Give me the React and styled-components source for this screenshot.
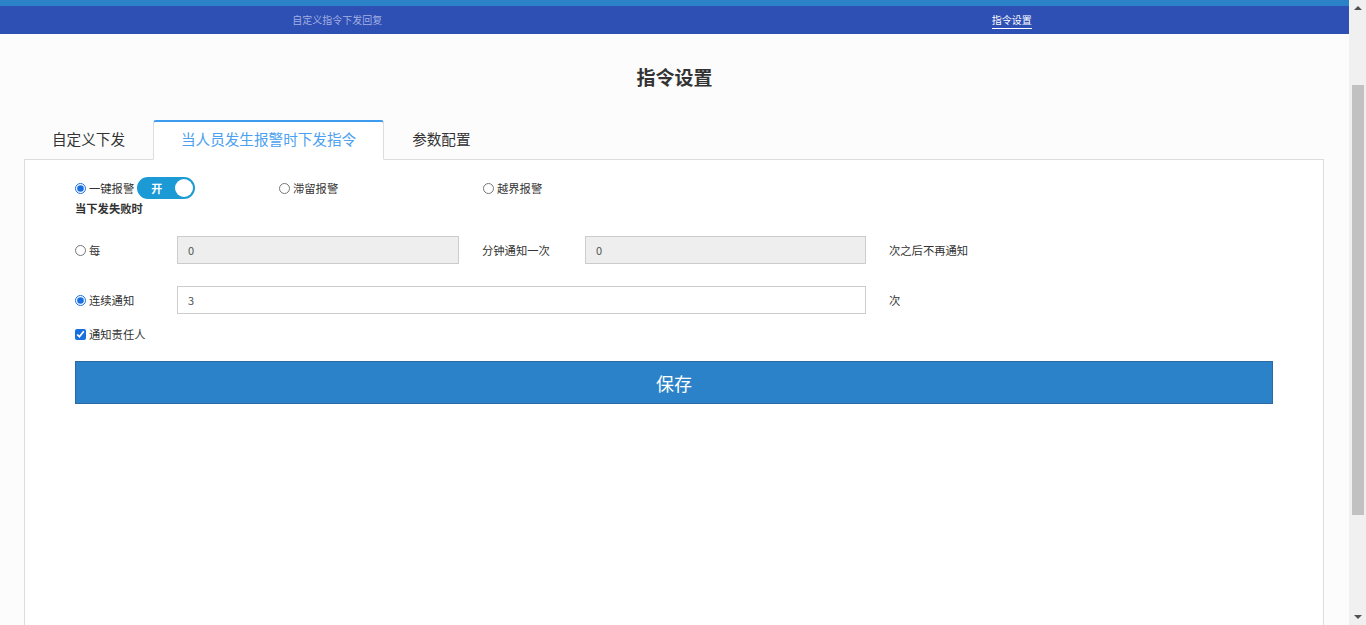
import React, { useState } from "react";
import styled, { createGlobalStyle } from "styled-components";

const GlobalStyle = createGlobalStyle`
  html, body {
    margin: 0;
    padding: 0;
    background: #fcfcfc;
    font-family: "Noto Sans CJK SC", "Noto Sans", sans-serif;
    color: #333;
    overflow: hidden;
  }
  * { box-sizing: border-box; }
`;

const Frame = styled.div`
  display: flex;
  height: 100vh;
`;

const Page = styled.div`
  flex: 1;
  min-width: 0;
  overflow: hidden;
`;

const ScrollBar = styled.aside`
  width: 17px;
  flex: none;
  background: #f0f0f0;
  display: flex;
  flex-direction: column;
  align-items: center;
  padding: 0 0 0 1px;
`;

const Arrow = styled.span`
  width: 0;
  height: 0;
  margin: 6px 0;
  border-left: 4px solid transparent;
  border-right: 4px solid transparent;
  ${({ $down }) =>
    $down ? "border-top: 4px solid #505050;" : "border-bottom: 4px solid #505050;"}
`;

const Track = styled.div`
  flex: 1;
  width: 100%;
  padding: 69px 2px 94px;
  display: flex;
`;

const Thumb = styled.div`
  flex: 1;
  background: #c1c1c1;
`;

const TopStrip = styled.div`
  height: 6px;
  background: #2b82c9;
`;

const NavBar = styled.nav`
  height: 28px;
  background: #2e4fb3;
  display: flex;
`;

const NavItem = styled.div`
  flex: 1;
  display: flex;
  justify-content: center;
  align-items: center;
`;

const NavLink = styled.span`
  font-size: 10px;
  line-height: 14px;
  color: ${({ $active }) => ($active ? "#fff" : "#a3b0e3")};
  padding-bottom: 1px;
  margin-top: 2px;
  border-bottom: 1px solid ${({ $active }) => ($active ? "#fff" : "transparent")};
`;

const Title = styled.h1`
  margin: 0;
  padding: 30px 0 26px;
  text-align: center;
  font-size: 19px;
  line-height: 26px;
  font-weight: 700;
  color: #333;
`;

const Main = styled.div`
  padding: 0 25px 22px 24px;
`;

const Tabs = styled.div`
  display: flex;
  height: 40px;
  margin-top: 4px;
  position: relative;
  z-index: 1;
  margin-bottom: -1px;
`;

const Tab = styled.div`
  padding: 0 27px 4px;
  height: 40px;
  display: flex;
  align-items: center;
  justify-content: center;
  font-size: 14.6px;
  color: ${({ $active }) => ($active ? "#4ba0f0" : "#333")};
  background: ${({ $active }) => ($active ? "#fff" : "transparent")};
  border: 1px solid ${({ $active }) => ($active ? "#ddd" : "transparent")};
  border-top: 2px solid ${({ $active }) => ($active ? "#3d9cf0" : "transparent")};
  border-bottom-color: ${({ $active }) => ($active ? "#fff" : "transparent")};
  border-radius: 3px 3px 0 0;
`;

const Panel = styled.section`
  background: #fff;
  border: 1px solid #ddd;
  min-height: 680px;
  padding: 17px 50px 20px 50px;
`;

const AlarmRow = styled.div`
  display: grid;
  grid-template-columns: repeat(3, 204px);
  align-items: center;
  height: 22px;
`;

const RadioLabel = styled.label`
  display: flex;
  align-items: center;
  gap: 3px;
  font-size: 11.3px;
  color: #333;
  white-space: nowrap;
`;

const Radio = styled.input.attrs({ type: "radio" })`
  width: 11px;
  height: 11px;
  margin: 0;
  accent-color: #1a6fe0;
`;

const Check = styled.input.attrs({ type: "checkbox" })`
  width: 11px;
  height: 11px;
  margin: 0;
  accent-color: #1a6fe0;
`;

const Toggle = styled.span`
  width: 58px;
  height: 22px;
  border-radius: 11px;
  background: #1b9ad6;
  display: flex;
  align-items: center;
  justify-content: space-between;
  padding: 0 2px 0 14px;
  color: #fff;
  font-size: 11px;
  font-weight: 700;
`;

const Knob = styled.span`
  width: 18px;
  height: 18px;
  border-radius: 50%;
  background: #fff;
`;

const SubTitle = styled.div`
  font-size: 11.3px;
  font-weight: 700;
  margin: 1px 0 20px;
  line-height: 16px;
`;

const FormRow = styled.div`
  display: grid;
  grid-template-columns: 102px 282px 126px 281px auto;
  align-items: center;
  margin-bottom: ${({ $gap }) => $gap}px;
`;

const Input = styled.input`
  height: 28px;
  width: 100%;
  border: 1px solid #ccc;
  background: ${({ disabled }) => (disabled ? "#eee" : "#fff")};
  color: #555;
  font-family: inherit;
  font-size: 11px;
  padding: 0 10px;
  outline: none;
  grid-column: ${({ $span }) => ($span ? "2 / 5" : "auto")};
`;

const Text = styled.span`
  font-size: 11.3px;
  color: #333;
  padding-left: 23px;
  white-space: nowrap;
`;

const CheckRow = styled.div`
  margin: 12px 0 19px;
`;

const SaveButton = styled.button`
  width: 100%;
  height: 43px;
  background: #2b82c8;
  border: 1px solid #2a6aa0;
  color: #fff;
  font-family: inherit;
  font-size: 18px;
  cursor: pointer;
`;

export default function App() {
  const [tab] = useState(1);
  const tabs = ["自定义下发", "当人员发生报警时下发指令", "参数配置"];

  return (
    <Frame>
      <GlobalStyle />
      <Page>
        <TopStrip />
        <NavBar>
          <NavItem>
            <NavLink>自定义指令下发回复</NavLink>
          </NavItem>
          <NavItem>
            <NavLink $active>指令设置</NavLink>
          </NavItem>
        </NavBar>
        <Title>指令设置</Title>
        <Main>
          <Tabs>
            {tabs.map((t, i) => (
              <Tab key={t} $active={i === tab}>
                {t}
              </Tab>
            ))}
          </Tabs>
          <Panel>
            <AlarmRow>
              <RadioLabel>
                <Radio name="alarm" defaultChecked />
                一键报警
                <Toggle>
                  开<Knob />
                </Toggle>
              </RadioLabel>
              <RadioLabel>
                <Radio name="alarm" />
                滞留报警
              </RadioLabel>
              <RadioLabel>
                <Radio name="alarm" />
                越界报警
              </RadioLabel>
            </AlarmRow>
            <SubTitle>当下发失败时</SubTitle>
            <FormRow $gap={22}>
              <RadioLabel>
                <Radio name="mode" />
                每
              </RadioLabel>
              <Input disabled defaultValue="0" />
              <Text>分钟通知一次</Text>
              <Input disabled defaultValue="0" />
              <Text>次之后不再通知</Text>
            </FormRow>
            <FormRow $gap={0}>
              <RadioLabel>
                <Radio name="mode" defaultChecked />
                连续通知
              </RadioLabel>
              <Input $span defaultValue="3" />
              <Text>次</Text>
            </FormRow>
            <CheckRow>
              <RadioLabel>
                <Check defaultChecked />
                通知责任人
              </RadioLabel>
            </CheckRow>
            <SaveButton>保存</SaveButton>
          </Panel>
        </Main>
      </Page>
      <ScrollBar>
        <Arrow />
        <Track>
          <Thumb />
        </Track>
        <Arrow $down />
      </ScrollBar>
    </Frame>
  );
}
